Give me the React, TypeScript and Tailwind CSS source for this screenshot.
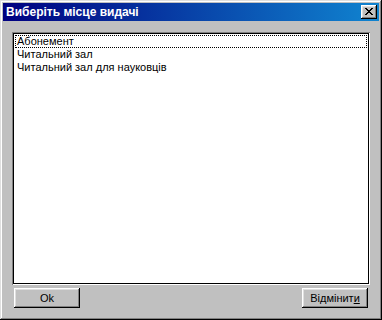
import React from "react";

const font = { fontFamily: '"Liberation Sans", Arial, sans-serif' };

export default function App() {
  return (
    <div
      className="w-[382px] h-[320px] bg-[#c0c0c0] p-[3px] flex flex-col shadow-[inset_-1px_-1px_#000,inset_1px_1px_#dfdfdf,inset_-2px_-2px_#808080,inset_2px_2px_#fff]"
      style={font}
    >
      <div className="h-[18px] flex items-center justify-between pl-[3px] pr-[2px] bg-[linear-gradient(to_right,#000080,#1084d0)]">
        <span className="text-white font-bold text-[12px] leading-none">Виберіть місце видачі</span>
        <div className="w-[16px] h-[14px] bg-[#c0c0c0] flex items-center justify-center shadow-[inset_-1px_-1px_#000,inset_1px_1px_#fff,inset_-2px_-2px_#808080,inset_2px_2px_#dfdfdf]">
          <svg width="8" height="7" viewBox="0 0 8 7" shapeRendering="crispEdges" className="-mt-[1px]">
            <path
              d="M0 0h2v1h-2z M6 0h2v1h-2z M1 1h2v1h-2z M5 1h2v1h-2z M2 2h4v1h-4z M3 3h2v1h-2z M2 4h4v1h-4z M1 5h2v1h-2z M5 5h2v1h-2z M0 6h2v1h-2z M6 6h2v1h-2z"
              fill="#000"
            />
          </svg>
        </div>
      </div>
      <div className="flex-1 flex flex-col px-[9px] pt-[11px] pb-[9px]">
        <div className="flex-1 bg-white p-[3px] shadow-[inset_1px_1px_#808080,inset_-1px_-1px_#fff,inset_2px_2px_#000,inset_-2px_-2px_#000]">
          <div className="text-[11px] leading-[13px] text-black">
            <div className="h-[13px] border border-dotted border-black pl-[1px] leading-[11px]">Абонемент</div>
            <div className="h-[13px] pl-[2px]">Читальний зал</div>
            <div className="h-[13px] pl-[2px]">Читальний зал для науковців</div>
          </div>
        </div>
        <div className="mt-[3px] flex justify-between px-[2px]">
          <button className="w-[66px] h-[20px] bg-[#c0c0c0] text-[11px] text-black shadow-[inset_-1px_-1px_#000,inset_1px_1px_#fff,inset_-2px_-2px_#808080,inset_2px_2px_#dfdfdf]">
            Ok
          </button>
          <button className="w-[66px] h-[20px] bg-[#c0c0c0] text-[11px] text-black shadow-[inset_-1px_-1px_#000,inset_1px_1px_#fff,inset_-2px_-2px_#808080,inset_2px_2px_#dfdfdf]">
            Відмінит<span className="underline">и</span>
          </button>
        </div>
      </div>
    </div>
  );
}
